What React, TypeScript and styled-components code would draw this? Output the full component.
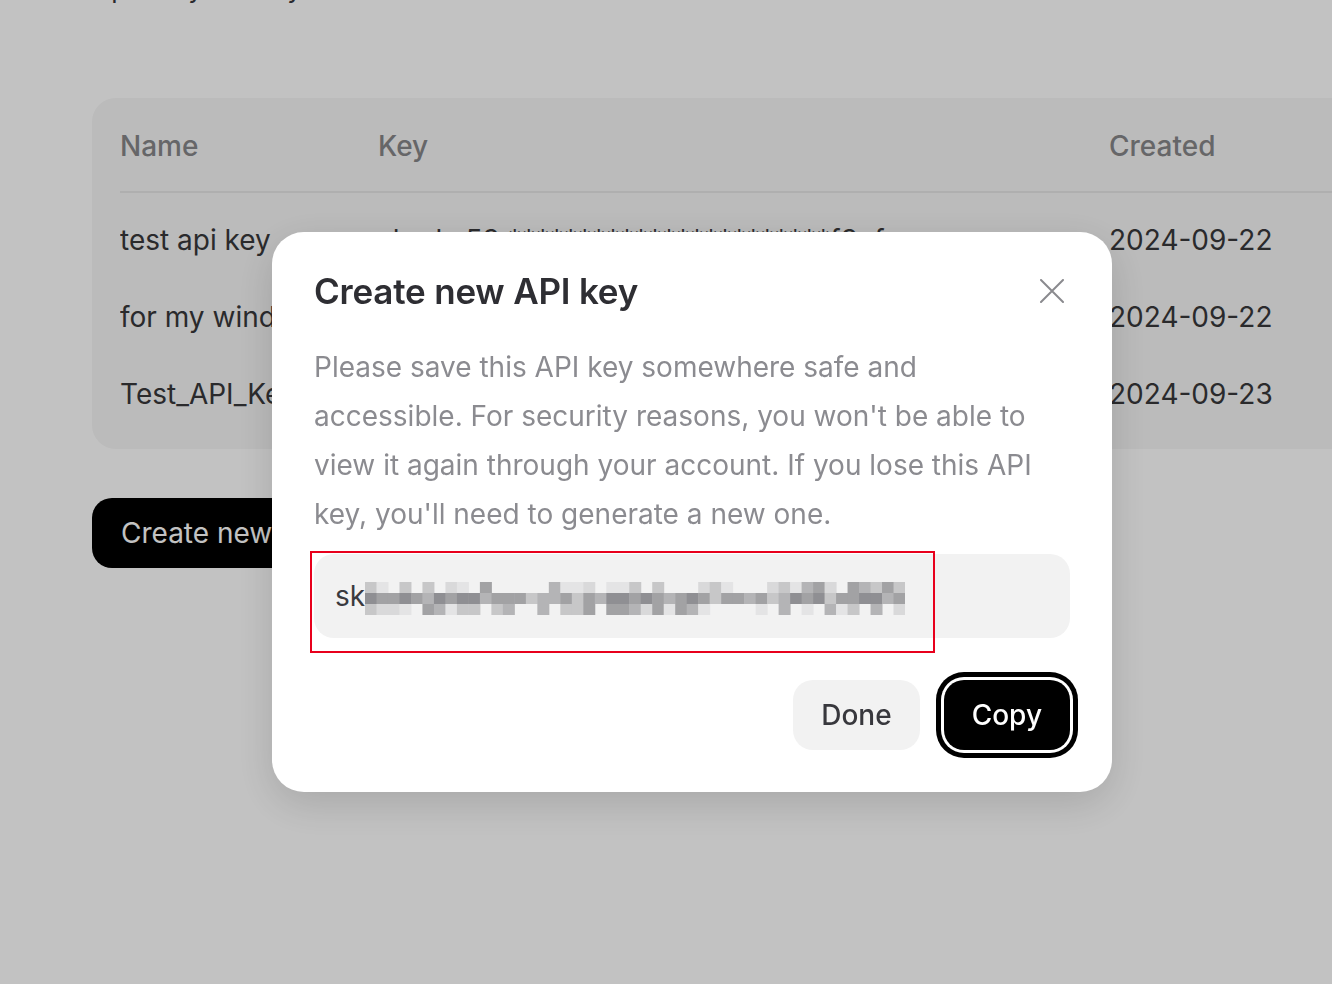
import React from "react";
import styled, { createGlobalStyle } from "styled-components";

const Global = createGlobalStyle`
  html, body { margin: 0; padding: 0; background: #ffffff; }
  body { font-family: Inter, "Noto Sans", "Liberation Sans", sans-serif; -webkit-font-smoothing: antialiased; }
  * { box-sizing: border-box; }
`;

const Page = styled.div`
  width: 1332px;
  height: 984px;
  overflow: hidden;
  padding-left: 92px;
  background: #ffffff;
`;

const Intro = styled.p`
  margin: -27px 0 0 0;
  font-size: 26px;
  line-height: 32px;
  color: #38383d;
  white-space: nowrap;
`;

const Card = styled.div`
  margin-top: 93px;
  width: 1300px;
  background: #f6f6f6;
  border-radius: 24px;
  padding: 0 28px 17px;
`;

const Row = styled.div<{ $head?: boolean }>`
  display: grid;
  grid-template-columns: 258px 731px 1fr;
  align-items: center;
  height: ${(p) => (p.$head ? "95px" : "77px")};
  padding-top: ${(p) => (p.$head ? "3px" : "0")};
  font-size: 28px;
  color: ${(p) => (p.$head ? "#868689" : "#38383b")};
  font-weight: ${(p) => (p.$head ? 500 : 400)};
  border-bottom: ${(p) => (p.$head ? "2px solid #e6e6e6" : "none")};
  margin-bottom: ${(p) => (p.$head ? "8px" : "0")};
  white-space: pre;
`;

const Cell = styled.div`
  overflow: hidden;
`;

const CreateButton = styled.button`
  margin-top: 49px;
  height: 70px;
  padding: 0 29px;
  border: none;
  border-radius: 20px;
  background: #000;
  color: #fff;
  font-family: inherit;
  font-size: 28px;
  font-weight: 400;
`;

const Overlay = styled.div`
  position: fixed;
  inset: 0;
  background: rgba(0, 0, 0, 0.24);
  padding: 232px 0 0 272px;
`;

const Modal = styled.div`
  width: 840px;
  background: #fff;
  border-radius: 32px;
  padding: 37px 42px 42px;
  box-shadow: 0 12px 40px rgba(0, 0, 0, 0.14);
`;

const TitleRow = styled.div`
  display: flex;
  align-items: center;
  justify-content: space-between;
`;

const Title = styled.h2`
  margin: 0;
  font-size: 35px;
  line-height: 44px;
  font-weight: 600;
  letter-spacing: -0.2px;
  color: #2e2e33;
`;

const CloseButton = styled.button`
  display: flex;
  align-items: center;
  justify-content: center;
  width: 40px;
  height: 40px;
  margin-right: -2px;
  padding: 0;
  border: none;
  background: transparent;
`;

const Description = styled.p`
  margin: 30px 0 0;
  max-width: 722px;
  font-size: 28px;
  line-height: 49px;
  color: #8b8b90;
`;

const FieldWrap = styled.div`
  position: relative;
  margin-top: 15px;
`;

const KeyField = styled.div`
  display: flex;
  align-items: center;
  height: 84px;
  border-radius: 20px;
  background: #f2f2f2;
  padding-left: 21px;
  font-size: 28px;
  color: #3a3a3f;
`;

const Annotation = styled.div`
  position: absolute;
  left: -4px;
  top: -3px;
  width: 625px;
  height: 102px;
  border: 2.5px solid #e8001c;
  pointer-events: none;
`;

const Footer = styled.div`
  display: flex;
  justify-content: flex-end;
  gap: 24px;
  margin-top: 42px;
`;

const ActionButton = styled.button<{ $primary?: boolean }>`
  height: 70px;
  min-width: 125px;
  padding: 0 28px;
  border: none;
  border-radius: 20px;
  font-family: inherit;
  font-size: 28px;
  font-weight: 500;
  background: ${(p) => (p.$primary ? "#000" : "#f2f2f2")};
  color: ${(p) => (p.$primary ? "#fff" : "#38383d")};
  box-shadow: ${(p) => (p.$primary ? "0 0 0 3px #fff, 0 0 0 8px #000" : "none")};
`;

const rows = [
  { name: "test api key", key: "sk-ab-53 " + "*".repeat(23) + "f3ef", created: "2024-09-22" },
  { name: "for my windows app", key: "sk-cd-91 " + "*".repeat(23) + "a8b2", created: "2024-09-22" },
  { name: "Test_API_Key", key: "sk-ef-27 " + "*".repeat(23) + "c4d1", created: "2024-09-23" },
];

function Mosaic() {
  const cols = 47;
  const w = 540 / cols;
  const shades = ["#8f8f93", "#a2a2a4", "#b4b4b6", "#c7c7c8", "#d9d9da", "#e4e4e5"];
  let seed = 7;
  const rnd = () => {
    seed = (seed * 9301 + 49297) % 233280;
    return seed / 233280;
  };
  const rects: React.ReactElement[] = [];
  for (let c = 0; c < cols; c++) {
    for (let r = 0; r < 3; r++) {
      const v = rnd();
      if (r !== 1 && v > 0.62) continue;
      const shade = r === 1 ? shades[Math.floor(rnd() * 4)] : shades[1 + Math.floor(rnd() * 5)];
      rects.push(<rect key={`${c}-${r}`} x={c * w} y={r * 11} width={w + 0.5} height={11} fill={shade} />);
    }
  }
  return (
    <svg width="540" height="33" viewBox="0 0 540 33" style={{ display: "block", marginTop: 4 }}>
      {rects}
    </svg>
  );
}

export default function App() {
  return (
    <>
      <Global />
      <Page>
        <Intro>Up to my API keys</Intro>
        <Card>
          <Row $head>
            <Cell>Name</Cell>
            <Cell>Key</Cell>
            <Cell>Created</Cell>
          </Row>
          {rows.map((r) => (
            <Row key={r.name}>
              <Cell>{r.name}</Cell>
              <Cell>{r.key}</Cell>
              <Cell>{r.created}</Cell>
            </Row>
          ))}
        </Card>
        <CreateButton>Create new API key</CreateButton>
      </Page>
      <Overlay>
        <Modal>
          <TitleRow>
            <Title>Create new API key</Title>
            <CloseButton aria-label="Close">
              <svg width="24" height="24" viewBox="0 0 24 24">
                <path d="M1 1 L23 23 M23 1 L1 23" stroke="#8a8a8e" strokeWidth="2" strokeLinecap="round" />
              </svg>
            </CloseButton>
          </TitleRow>
          <Description>
            Please save this API key somewhere safe and accessible. For security reasons, you won't be able to
            view it again through your account. If you lose this API key, you'll need to generate a new one.
          </Description>
          <FieldWrap>
            <KeyField>
              <span>sk</span>
              <Mosaic />
            </KeyField>
            <Annotation />
          </FieldWrap>
          <Footer>
            <ActionButton>Done</ActionButton>
            <ActionButton $primary>Copy</ActionButton>
          </Footer>
        </Modal>
      </Overlay>
    </>
  );
}
